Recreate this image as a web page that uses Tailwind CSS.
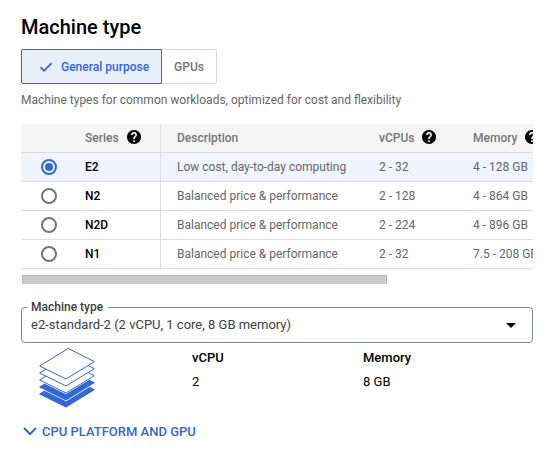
<!DOCTYPE html>
<html lang="en">
<head>
<meta charset="utf-8">
<title>Machine type</title>
<script src="https://cdn.jsdelivr.net/npm/@tailwindcss/browser@4"></script>
</head>
<body class="bg-white font-[Roboto,sans-serif] text-[12px] text-[#666]">
<svg class="hidden">
  <symbol id="help" viewBox="2 2 20 20"><path fill="#000" d="M12 2C6.48 2 2 6.48 2 12s4.48 10 10 10 10-4.48 10-10S17.52 2 12 2z"/><path fill="#fff" stroke="#fff" stroke-width=".5" d="M13 19h-2v-2h2v2zm2.07-7.75-.9.92C13.45 12.9 13 13.5 13 15h-2v-.5c0-1.1.45-2.1 1.17-2.83l1.24-1.26c.37-.36.59-.86.59-1.41 0-1.1-.9-2-2-2s-2 .9-2 2H8c0-2.21 1.79-4 4-4s4 1.79 4 4c0 .88-.36 1.68-.93 2.25z"/></symbol>
</svg>
<main class="w-[512px] ml-[21px] pt-[15px]">
  <h1 class="text-[20px] leading-6 font-medium text-black h-[34px]">Machine type</h1>
  <div class="flex h-[35px]">
    <button class="flex items-center w-[141px] pl-[16px] rounded-l-[2px] border border-[#3367d6] bg-[#e8eefa] text-[#3367d6] font-medium"><svg class="w-4 h-4 mr-[7px]" viewBox="0 0 24 24"><path fill="currentColor" d="M9 16.17 4.83 12l-1.42 1.41L9 19 21 7l-1.41-1.41z" stroke="currentColor" stroke-width="1"/></svg>General purpose</button>
    <button class="w-[55px] rounded-r-[2px] border border-l-0 border-[#dadada] font-medium text-[#757575]">GPUs</button>
  </div>
  <p class="mt-2 h-8 leading-4 whitespace-nowrap">Machine types for common workloads, optimized for cost and flexibility</p>

  <section class="w-[512px] overflow-hidden whitespace-nowrap">
    <div class="grid grid-cols-[64px_76px_201px_95px_100px] h-[29px] bg-[#f5f5f5] border-b border-[#dcdcdc] font-medium text-[#757575]">
      <div></div>
      <div class="flex items-center gap-2 border-r border-[#dcdcdc]">Series<svg class="w-[14px] h-[14px] mb-[2px]"><use href="#help"/></svg></div>
      <div class="flex items-center pl-4">Description</div>
      <div class="flex items-center gap-2 pl-[17px]">vCPUs<svg class="w-[14px] h-[14px] mb-[2px]"><use href="#help"/></svg></div>
      <div class="flex items-center gap-2 pl-4">Memory<svg class="w-[14px] h-[14px] mb-[2px] shrink-0"><use href="#help"/></svg></div>
    </div>
    <div class="grid grid-cols-[64px_76px_201px_95px_100px] h-[29px] bg-[#f0f4fe] border-b border-[#dcdcdc]">
      <div class="flex items-center pl-5"><span class="w-4 h-4 rounded-full border-2 border-[#3367d6] flex items-center justify-center"><span class="w-2 h-2 rounded-full bg-[#3367d6]"></span></span></div>
      <div class="flex items-center border-r border-[#dcdcdc] font-medium text-black">E2</div>
      <div class="flex items-center pl-4">Low cost, day-to-day computing</div>
      <div class="flex items-center pl-[17px]">2 - 32</div>
      <div class="flex items-center pl-4">4 - 128 GB</div>
    </div>
    <div class="grid grid-cols-[64px_76px_201px_95px_100px] h-[29px] border-b border-[#dcdcdc]">
      <div class="flex items-center pl-5"><span class="w-4 h-4 rounded-full border-2 border-[#757575]"></span></div>
      <div class="flex items-center border-r border-[#dcdcdc] font-medium text-black">N2</div>
      <div class="flex items-center pl-4">Balanced price &amp; performance</div>
      <div class="flex items-center pl-[17px]">2 - 128</div>
      <div class="flex items-center pl-4">4 - 864 GB</div>
    </div>
    <div class="grid grid-cols-[64px_76px_201px_95px_100px] h-[29px] border-b border-[#dcdcdc]">
      <div class="flex items-center pl-5"><span class="w-4 h-4 rounded-full border-2 border-[#757575]"></span></div>
      <div class="flex items-center border-r border-[#dcdcdc] font-medium text-black">N2D</div>
      <div class="flex items-center pl-4">Balanced price &amp; performance</div>
      <div class="flex items-center pl-[17px]">2 - 224</div>
      <div class="flex items-center pl-4">4 - 896 GB</div>
    </div>
    <div class="grid grid-cols-[64px_76px_201px_95px_100px] h-[29px] border-b border-[#dcdcdc]">
      <div class="flex items-center pl-5"><span class="w-4 h-4 rounded-full border-2 border-[#757575]"></span></div>
      <div class="flex items-center border-r border-[#dcdcdc] font-medium text-black">N1</div>
      <div class="flex items-center pl-4">Balanced price &amp; performance</div>
      <div class="flex items-center pl-[17px]">2 - 32</div>
      <div class="flex items-center pl-4">7.5 - 208 GB</div>
    </div>
  </section>
  <div class="mt-[6px] ml-px w-[365px] h-[9px] bg-[#cbcbcb] border border-b-0 border-[#b4b4b4]"></div>

  <div class="relative mt-[23px] h-9 rounded-[4px] border border-[#80868b] flex items-center justify-between pl-[9px] pr-4 text-[13px] text-[#3c4043]">
    <span class="absolute left-[5px] -top-[9px] px-1 pr-[5px] bg-white text-[12px] leading-4 font-medium">Machine type</span>
    <span>e2-standard-2 (2 vCPU, 1 core, 8 GB memory)</span>
    <svg class="w-[10px] h-[5px]" viewBox="0 0 10 5"><path d="M0 0h10L5 5z" fill="#000"/></svg>
  </div>

  <div class="flex h-[70px] pl-[17px] text-black text-[13px]">
    <svg class="w-[58px] h-[62px] mt-[4px] shrink-0" viewBox="38 347 58 62" stroke-linejoin="round">
      <g fill="#3367d6" stroke="#3367d6">
        <path d="M68.3 376.4 94.3 389.7 66 407 39.7 394z"/>
        <path d="M68.3 369.4 94.3 382.7 66 400 39.7 387z" stroke="#fff" stroke-width="2.4"/>
        <path d="M68.3 369.4 94.3 382.7 66 400 39.7 387z"/>
      </g>
      <g fill="#fff" stroke="#3367d6">
        <path d="M68.3 362.4 94.3 375.7 66 393 39.7 380z" stroke="#fff" stroke-width="2"/>
        <path d="M68.3 362.4 94.3 375.7 66 393 39.7 380z"/>
        <path d="M68.3 355.4 94.3 368.7 66 386 39.7 373z"/>
        <path d="M68.3 348.4 94.3 361.7 66 379 39.7 366z"/>
      </g>
    </svg>
    <dl class="ml-24 w-[171px] pt-[7px] leading-4"><dt class="font-medium">vCPU</dt><dd class="mt-2">2</dd></dl>
    <dl class="pt-[7px] leading-4"><dt class="font-medium">Memory</dt><dd class="mt-2">8 GB</dd></dl>
  </div>
  <button class="flex items-center mt-[11px] h-4 text-[13px] text-[#3367d6] font-medium whitespace-nowrap"><svg class="ml-[2px] mr-[5px] mb-px w-[14px] h-[9px]" viewBox="0 0 14 9"><path d="M1 1l6 6 6-6" fill="none" stroke="currentColor" stroke-width="2"/></svg>CPU PLATFORM AND GPU</button>
</main>
</body>
</html>
